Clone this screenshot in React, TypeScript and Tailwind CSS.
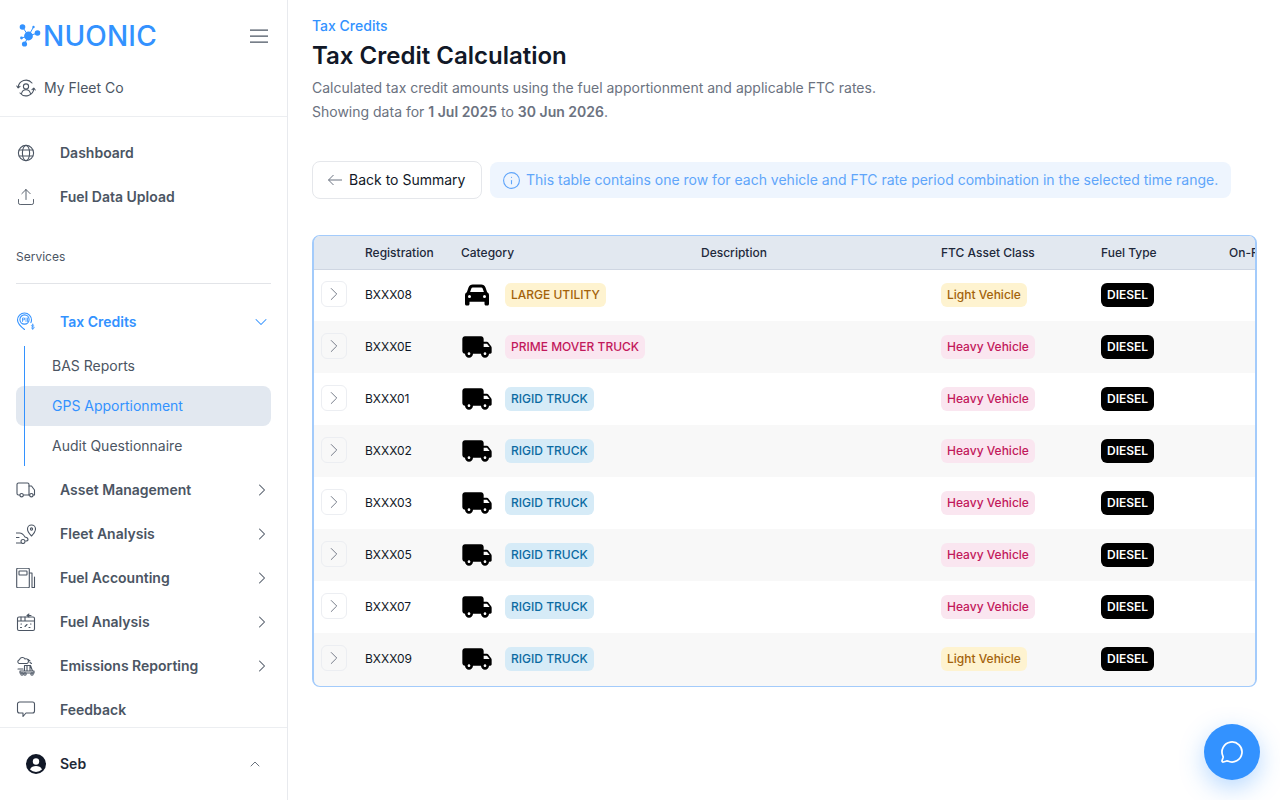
import { ChevronDown, ChevronRight, ChevronUp, Info, MessageCircle, Upload } from "lucide-react";
import { FaCar } from "react-icons/fa6";
import type { ReactNode } from "react";

const font = { fontFamily: "Inter, 'Liberation Sans', sans-serif" };

function Logo() {
  return (
    <svg width="25" height="24" viewBox="0 0 24 24" className="shrink-0" fill="#3392ff" stroke="#3392ff">
      <path d="M4 3 L10 12 L19 9 M10 12 L6 20 M10 12 L3 14 M10 12 L15 3" strokeWidth="1" fill="none" />
      <circle cx="4" cy="3" r="2.8" stroke="none" />
      <circle cx="10" cy="12" r="4.4" stroke="none" />
      <circle cx="19" cy="9" r="2.8" stroke="none" />
      <circle cx="6" cy="20" r="2.6" stroke="none" />
      <circle cx="3" cy="14" r="1.4" stroke="none" />
      <circle cx="15" cy="3" r="1.2" stroke="none" />
    </svg>
  );
}

function SvgIcon({ children, className = "text-[#4b5563]" }: { children: ReactNode; className?: string }) {
  return (
    <svg width="20" height="20" viewBox="0 0 20 20" fill="none" stroke="currentColor" strokeWidth="1.1" strokeLinecap="round" strokeLinejoin="round" className={className}>
      {children}
    </svg>
  );
}

function TruckSolid() {
  return (
    <svg width="32" height="32" viewBox="0 0 24 24" fill="currentColor">
      <path d="M19.500 8H17V6c0-1.100-.9-2-2-2H3c-1.100 0-2 .9-2 2v9c0 1.100.9 2 2 2 0 1.660 1.340 3 3 3s3-1.340 3-3h6c0 1.660 1.340 3 3 3s3-1.340 3-3h1c.55 0 1-.45 1-1v-3.330c0-.43-.14-.85-.4-1.200L20.300 8.400c-.19-.25-.49-.4-.8-.4zM6 18c-.55 0-1-.45-1-1s.45-1 1-1 1 .45 1 1-.45 1-1 1zm13.500-8.500l1.960 2.500H17V9.500h2.500zM18 18c-.55 0-1-.45-1-1s.45-1 1-1 1 .45 1 1-.45 1-1 1z" />
    </svg>
  );
}

const CompanyIcon = (
  <SvgIcon>
    <circle cx="10" cy="8.500" r="2.600" />
    <path d="M5.500 15.500c.6-2.600 2.400-3.800 4.500-3.800s3.900 1.200 4.500 3.800" />
    <path d="M2.200 9.500A7.800 7.800 0 0 1 16 5M17.800 10.500A7.800 7.800 0 0 1 4 15" />
    <path d="M.8 8l1.400 1.800L4 8.300M19.200 12l-1.400-1.800L16 11.700" />
  </SvgIcon>
);

const GlobeIcon = (
  <SvgIcon>
    <circle cx="10" cy="10" r="7.600" />
    <ellipse cx="10" cy="10" rx="3.600" ry="7.600" />
    <path d="M3.200 7h13.600M3.200 13h13.600" />
  </SvgIcon>
);

const TaxIcon = (
  <SvgIcon className="text-[#3392ff]">
    <path d="M8.500 17.500C4 14 1.500 11 1.500 8a7 7 0 0 1 14 0c0 1-.2 1.800-.6 2.600" />
    <circle cx="8.500" cy="7.500" r="4.600" />
    <path d="M6.500 9.500V6h2v1.800h-2M10 6v3.500M11.500 6v3.500" strokeWidth=".8" />
    <path d="M18 13.500c-.5-.8-2.500-.8-2.500.3 0 1.200 2.700.6 2.700 1.900 0 1.100-2.200 1.100-2.900.2M16.700 12v5.500" strokeWidth=".8" />
  </SvgIcon>
);

const VanIcon = (
  <SvgIcon>
    <path d="M3.800 15H2.500A1.500 1.500 0 0 1 1 13.500v-9A1.500 1.500 0 0 1 2.500 3h9A1.500 1.500 0 0 1 13 4.500V15H7.500" />
    <path d="M13 6h2.500l3 4v5h-1.300M13 15h.5" />
    <circle cx="5.600" cy="15.200" r="1.700" />
    <circle cx="15.400" cy="15.200" r="1.700" />
  </SvgIcon>
);

const FleetIcon = (
  <SvgIcon>
    <path d="M0 9h3.500c2 0 4 1.500 5.500 4 1.500.3 3 .8 3 2.500 0 1-1 1.500-2.200 1.500M0 13.500h3M0 19h5" />
    <circle cx="7" cy="17.500" r="2" />
    <path d="M15.500 12C13 9.500 11.500 7.500 11.500 5a4 4 0 0 1 8 0c0 2.500-1.500 4.500-4 7z" />
    <circle cx="15.500" cy="5" r="1.100" />
  </SvgIcon>
);

const PumpIcon = (
  <SvgIcon>
    <rect x=".7" y=".3" width="12.600" height="19.400" rx="1" />
    <rect x="3" y="3" width="8" height="4" rx=".5" />
    <path d="M13.300 5H16v14.500h2.500V9" />
  </SvgIcon>
);

const AnalysisIcon = (
  <SvgIcon>
    <rect x="1.500" y="5" width="17" height="13.500" rx="1.500" />
    <path d="M1.500 9h17M5 5v4M9 5v4M13 2l-2 1.500L13 5M11 3.500h4" />
    <path d="M5 12h.5M4.500 15.500h1M9 14.500l2-2M13 15.500h1M14.500 12h.5" />
  </SvgIcon>
);

const EmissionsIcon = (
  <SvgIcon>
    <path d="M3 7.500a2 2 0 0 1 .5-3.800 3 3 0 0 1 5.500-.7 2.200 2.200 0 0 1 2 4.500z" />
    <path d="M12 3.500l2 1.500M14 6.500l1.500 1" />
    <path d="M8.500 15V9.500h6l2 5.500M11 9.500V15M14 9.500V15M4 15h14v2H4zM2 13h5" />
    <circle cx="6" cy="18" r="1.200" />
    <circle cx="9" cy="18" r="1.200" />
    <circle cx="16" cy="18" r="1.200" />
  </SvgIcon>
);

const FeedbackIcon = (
  <SvgIcon>
    <path d="M3.500 2h13a2 2 0 0 1 2 2v7a2 2 0 0 1-2 2H10l-3 3.500V13H3.500a2 2 0 0 1-2-2V4a2 2 0 0 1 2-2z" />
  </SvgIcon>
);

const services = [
  { label: "Asset Management", icon: VanIcon },
  { label: "Fleet Analysis", icon: FleetIcon },
  { label: "Fuel Accounting", icon: PumpIcon },
  { label: "Fuel Analysis", icon: AnalysisIcon },
  { label: "Emissions Reporting", icon: EmissionsIcon },
];

const rows = [
  { reg: "BXXX08", cat: "LARGE UTILITY", tone: "amber", cls: "Light Vehicle", car: true },
  { reg: "BXXX0E", cat: "PRIME MOVER TRUCK", tone: "pink", cls: "Heavy Vehicle" },
  { reg: "BXXX01", cat: "RIGID TRUCK", tone: "sky", cls: "Heavy Vehicle" },
  { reg: "BXXX02", cat: "RIGID TRUCK", tone: "sky", cls: "Heavy Vehicle" },
  { reg: "BXXX03", cat: "RIGID TRUCK", tone: "sky", cls: "Heavy Vehicle" },
  { reg: "BXXX05", cat: "RIGID TRUCK", tone: "sky", cls: "Heavy Vehicle" },
  { reg: "BXXX07", cat: "RIGID TRUCK", tone: "sky", cls: "Heavy Vehicle" },
  { reg: "BXXX09", cat: "RIGID TRUCK", tone: "sky", cls: "Light Vehicle" },
];

const tones: Record<string, string> = {
  amber: "bg-[#fef3d0] text-[#a3620a]",
  pink: "bg-[#fae6f0] text-[#c2185b]",
  sky: "bg-[#d6ebf7] text-[#0b6aa2]",
};

function Badge({ tone, children }: { tone: string; children: ReactNode }) {
  return <span className={`inline-flex h-6 items-center rounded-md px-1.5 text-xs font-medium ${tones[tone]}`}>{children}</span>;
}

function NavItem({ icon, label, chevron }: { icon: ReactNode; label: string; chevron?: boolean }) {
  return (
    <div className="flex h-11 shrink-0 items-center pl-4 pr-[15px] text-sm font-semibold text-[#4b5563]">
      <span className="flex w-11 shrink-0">{icon}</span>
      <span className="flex-1">{label}</span>
      {chevron && <ChevronRight size={20} strokeWidth={1.25} />}
    </div>
  );
}

function Sidebar() {
  return (
    <aside className="flex h-screen w-[288px] shrink-0 flex-col border-r border-[#e8eaee] bg-white">
      <div className="flex h-[72px] shrink-0 items-center justify-between pl-[18px] pr-[19px]">
        <div className="flex items-center">
          <Logo />
          <span className="text-[28px] leading-none font-medium tracking-[0.2px] text-[#3392ff]">NUONIC</span>
        </div>
        <svg width="18" height="14" viewBox="0 0 18 14" fill="none" stroke="#4b5563" strokeWidth="1.25">
          <path d="M0 1h18M0 7h18M0 13h18" />
        </svg>
      </div>
      <div className="flex h-[45px] shrink-0 items-start gap-2 border-b border-[#eceef1] pl-4 text-sm text-[#4b5563]">
        <span className="flex h-8 items-center">{CompanyIcon}</span>
        <span className="flex h-8 items-center">My Fleet Co</span>
      </div>
      <nav className="flex min-h-0 flex-1 flex-col overflow-hidden pt-[14px]">
        <NavItem icon={GlobeIcon} label="Dashboard" />
        <NavItem icon={<Upload size={20} strokeWidth={1.1} />} label="Fuel Data Upload" />
        <div className="mx-4 mt-[30px] shrink-0 border-b border-[#e2e4e8] pb-[18px] text-xs leading-4 text-[#4b5563]">Services</div>
        <div className="mt-4 flex h-11 shrink-0 items-center pl-4 pr-4 text-sm font-semibold text-[#3392ff]">
          <span className="flex w-11 shrink-0">{TaxIcon}</span>
          <span className="flex-1">Tax Credits</span>
          <ChevronDown size={20} strokeWidth={1.25} />
        </div>
        <div className="relative mx-4 my-0.5 shrink-0 text-sm text-[#4b5563]">
          <div className="flex h-10 items-center pl-9">BAS Reports</div>
          <div className="flex h-10 items-center rounded-lg bg-[#e2e8f0] pl-9 text-[#3392ff]">GPS Apportionment</div>
          <div className="flex h-10 items-center pl-9">Audit Questionnaire</div>
          <span className="absolute inset-y-0 left-2 w-px bg-[#3392ff]" />
        </div>
        {services.map((s) => (
          <NavItem key={s.label} icon={s.icon} label={s.label} chevron />
        ))}
        <NavItem icon={FeedbackIcon} label="Feedback" />
      </nav>
      <div className="flex h-[73px] shrink-0 items-center border-t border-[#eceef1] pl-[26px] pr-6">
        <svg width="20" height="20" viewBox="0 0 20 20" className="mr-[14px] shrink-0">
          <circle cx="10" cy="10" r="10" fill="#111827" />
          <circle cx="10" cy="7.500" r="3.200" fill="#fff" />
          <path d="M4 15.500c1-2.800 3.500-3.500 6-3.500s5 .7 6 3.500a8.500 8.500 0 0 1-12 0z" fill="#fff" />
        </svg>
        <span className="flex-1 text-sm font-semibold text-[#1f2937]">Seb</span>
        <ChevronUp size={16} strokeWidth={1.25} className="text-[#4b5563]" />
      </div>
    </aside>
  );
}

function FuelTable() {
  return (
    <div className="w-[945px] overflow-hidden rounded-lg border-x-2 border-y border-[#a3cbfb] bg-[#f8f8f8] pb-px">
      <table className="w-[1200px] table-fixed border-collapse text-left text-xs text-[#111827]">
        <colgroup>
          <col className="w-[51px]" />
          <col className="w-[96px]" />
          <col className="w-[240px]" />
          <col className="w-[240px]" />
          <col className="w-[160px]" />
          <col className="w-[128px]" />
          <col />
        </colgroup>
        <thead>
          <tr className="h-[33px] border-b border-[#cfd6e2] bg-[#e2e8f0] text-[#1e293b]">
            <th />
            <th className="pt-0.5 font-medium">Registration</th>
            <th className="pt-0.5 font-medium">Category</th>
            <th className="pt-0.5 font-medium">Description</th>
            <th className="pt-0.5 font-medium">FTC Asset Class</th>
            <th className="pt-0.5 font-medium">Fuel Type</th>
            <th className="pt-0.5 font-medium">On-Road Litres</th>
          </tr>
        </thead>
        <tbody>
          {rows.map((r) => (
            <tr key={r.reg} className="h-[52px] odd:bg-white even:bg-[#f8f8f8]">
              <td className="pl-[7px]">
                <span className="mb-0.5 flex h-[26px] w-[26px] items-center justify-center rounded-md border border-[#eceef2] text-[#6b7280]">
                  <ChevronRight size={22} strokeWidth={1} />
                </span>
              </td>
              <td>{r.reg}</td>
              <td>
                <div className="flex items-center gap-3">
                  <span className="flex w-8 justify-center text-black">
                    {r.car ? <FaCar size={24} /> : <TruckSolid />}
                  </span>
                  <Badge tone={r.tone}>{r.cat}</Badge>
                </div>
              </td>
              <td />
              <td>
                <Badge tone={r.cls === "Light Vehicle" ? "amber" : "pink"}>{r.cls}</Badge>
              </td>
              <td>
                <span className="inline-flex h-6 items-center rounded-md bg-black px-1.5 text-xs font-semibold text-white">DIESEL</span>
              </td>
              <td />
            </tr>
          ))}
        </tbody>
      </table>
    </div>
  );
}

export default function App() {
  return (
    <div className="flex h-screen overflow-hidden bg-white" style={font}>
      <Sidebar />
      <main className="flex-1 pl-6 pt-4">
        <div className="text-sm leading-5 font-medium text-[#3392ff]">Tax Credits</div>
        <h1 className="mt-1 text-2xl leading-8 font-semibold text-[#111827]">Tax Credit Calculation</h1>
        <p className="mt-[4px] text-sm leading-6 text-[#6b7280]">
          Calculated tax credit amounts using the fuel apportionment and applicable FTC rates.
          <br />
          Showing data for <b className="font-semibold">1 Jul 2025</b> to <b className="font-semibold">30 Jun 2026</b>.
        </p>
        <div className="mt-[37px] flex items-center gap-2">
          <button className="flex h-[38px] w-[170px] items-center gap-[7px] rounded-lg border border-[#e5e7eb] pl-[15px] text-sm text-[#111827]">
            <svg width="14" height="12" viewBox="0 0 14 12" fill="none" stroke="#6b7280" strokeWidth="1">
              <path d="M0.500 6H14M5.500 1L0.500 6l5 5" />
            </svg>
            Back to Summary
          </button>
          <div className="flex h-9 items-center gap-[5px] rounded-lg bg-[#eef5fe] pl-3 pr-[13px] text-sm text-[#60a5fa]">
            <Info size={19} strokeWidth={1.4} />
            This table contains one row for each vehicle and FTC rate period combination in the selected time range.
          </div>
        </div>
        <div className="mt-9">
          <FuelTable />
        </div>
      </main>
      <button className="fixed bottom-5 right-5 flex h-14 w-14 items-center justify-center rounded-full bg-[#3392ff] text-white shadow-[0_8px_24px_rgba(51,146,255,0.35)]">
        <MessageCircle size={24} strokeWidth={1.75} />
      </button>
    </div>
  );
}
